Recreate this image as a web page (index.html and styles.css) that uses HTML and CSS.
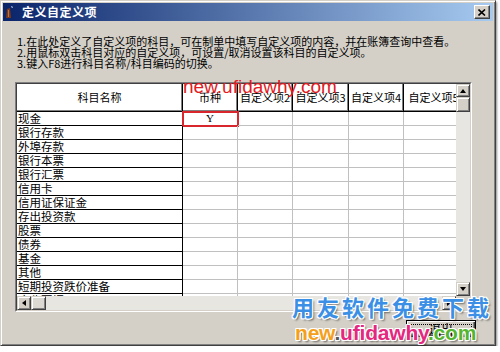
FILE: index.html
```html
<!DOCTYPE html>
<html lang="zh-CN">
<head>
<meta charset="UTF-8">
<meta name="viewport" content="width=device-width, initial-scale=1.0">
<title>定义自定义项</title>
<link rel="stylesheet" href="styles.css">
</head>
<body>
<div class="window">
    <div class="titlebar">
        <svg class="app-icon" viewBox="0 0 8 13" width="8" height="13">
            <path d="M2 3 L5 2 L6 12 L1 12 Z" fill="#7a3a1a"/>
            <path d="M3 4 L4 4 L4 11 L3 11 Z" fill="#c07040"/>
            <path d="M6 0 L8 1 L7 2 Z" fill="#fff"/>
        </svg>
        <span class="title">定义自定义项</span>
        <div class="close">
            <svg viewBox="0 0 8 7" width="8" height="7">
                <path d="M0.5 0.5 L7 6.5 M7 0.5 L0.5 6.5" stroke="#000" stroke-width="1.6"/>
            </svg>
        </div>
    </div>

    <div class="content">
        <div class="tips">
            <p>1.在此处定义了自定义项的科目，可在制单中填写自定义项的内容，并在账簿查询中查看。</p>
            <p>2.用鼠标双击科目对应的自定义项，可设置/取消设置该科目的自定义项。</p>
            <p>3.键入F8进行科目名称/科目编码的切换。</p>
        </div>

        <div class="grid">
            <div class="grid-inner">
                <div class="sheet">
                    <div class="row head">
                        <div class="cell name">科目名称</div>
                        <div class="cell">币种</div>
                        <div class="cell">自定义项2</div>
                        <div class="cell">自定义项3</div>
                        <div class="cell">自定义项4</div>
                        <div class="cell">自定义项5</div>
                    </div>
                    <div class="row"><div class="cell name">现金</div><div class="cell sel">Y</div><div class="cell"></div><div class="cell"></div><div class="cell"></div><div class="cell"></div></div>
                    <div class="row"><div class="cell name">银行存款</div><div class="cell"></div><div class="cell"></div><div class="cell"></div><div class="cell"></div><div class="cell"></div></div>
                    <div class="row"><div class="cell name">外埠存款</div><div class="cell"></div><div class="cell"></div><div class="cell"></div><div class="cell"></div><div class="cell"></div></div>
                    <div class="row"><div class="cell name">银行本票</div><div class="cell"></div><div class="cell"></div><div class="cell"></div><div class="cell"></div><div class="cell"></div></div>
                    <div class="row"><div class="cell name">银行汇票</div><div class="cell"></div><div class="cell"></div><div class="cell"></div><div class="cell"></div><div class="cell"></div></div>
                    <div class="row"><div class="cell name">信用卡</div><div class="cell"></div><div class="cell"></div><div class="cell"></div><div class="cell"></div><div class="cell"></div></div>
                    <div class="row"><div class="cell name">信用证保证金</div><div class="cell"></div><div class="cell"></div><div class="cell"></div><div class="cell"></div><div class="cell"></div></div>
                    <div class="row"><div class="cell name">存出投资款</div><div class="cell"></div><div class="cell"></div><div class="cell"></div><div class="cell"></div><div class="cell"></div></div>
                    <div class="row"><div class="cell name">股票</div><div class="cell"></div><div class="cell"></div><div class="cell"></div><div class="cell"></div><div class="cell"></div></div>
                    <div class="row"><div class="cell name">债券</div><div class="cell"></div><div class="cell"></div><div class="cell"></div><div class="cell"></div><div class="cell"></div></div>
                    <div class="row"><div class="cell name">基金</div><div class="cell"></div><div class="cell"></div><div class="cell"></div><div class="cell"></div><div class="cell"></div></div>
                    <div class="row"><div class="cell name">其他</div><div class="cell"></div><div class="cell"></div><div class="cell"></div><div class="cell"></div><div class="cell"></div></div>
                    <div class="row"><div class="cell name">短期投资跌价准备</div><div class="cell"></div><div class="cell"></div><div class="cell"></div><div class="cell"></div><div class="cell"></div></div>
                    <div class="row"><div class="cell name">应收票据</div><div class="cell"></div><div class="cell"></div><div class="cell"></div><div class="cell"></div><div class="cell"></div></div>
                </div>

                <div class="vscroll">
                    <div class="sb-btn up"></div>
                    <div class="sb-thumb v"></div>
                    <div class="sb-track"></div>
                    <div class="sb-btn down"></div>
                </div>

                <div class="hscroll">
                    <div class="sb-btn left"></div>
                    <div class="sb-thumb h"></div>
                    <div class="sb-track"></div>
                    <div class="sb-btn right"></div>
                </div>

                <div class="corner"></div>
            </div>
        </div>

        <div class="actions">
            <div class="btn"><span class="focus">退出</span></div>
        </div>
    </div>

    <!-- watermarks from the original screenshot -->
    <div class="mark mark-top">new.ufidawhy.com</div>
    <div class="mark mark-brand">用友软件免费下载</div>
    <div class="mark mark-site"><span class="orange">new</span><span class="dot">.</span><span class="pink">ufidawhy</span><span class="green">.com</span></div>
</div>
</body>
</html>
```

FILE: styles.css
```css
body {
    margin: 0;
    background-color: #fff;
    font-family: "Noto Sans CJK SC", "Liberation Sans", sans-serif;
    color: #000;
}

.window {
    position: relative;
    box-sizing: border-box;
    width: 496px;
    height: 346px;
    padding: 2px;
    background-color: #d4d0c8;
    border: 1px solid;
    border-color: #d4d0c8 #404040 #404040 #d4d0c8;
    box-shadow: inset 1px 1px 0 #fff, inset -1px -1px 0 #808080, 1px 2px 2px rgba(0, 0, 0, 0.45);
}

/* title bar */
.titlebar {
    display: flex;
    align-items: center;
    height: 18px;
    padding: 0 3px 0 2px;
    background: linear-gradient(to right, #0a246a, #a6caf0);
}

.app-icon {
    margin-right: 9px;
}

.title {
    flex: 1;
    color: #fff;
    font-size: 12px;
    font-weight: bold;
    letter-spacing: 0.5px;
    line-height: 18px;
}

.close {
    display: flex;
    align-items: center;
    justify-content: center;
    box-sizing: border-box;
    width: 16px;
    height: 14px;
    background-color: #d4d0c8;
    border: 1px solid;
    border-color: #fff #404040 #404040 #fff;
    box-shadow: inset -1px -1px 0 #808080;
}

/* body */
.content {
    padding: 15px 0 0 12px;
}

.tips {
    padding-left: 2px;
    font-size: 11px;
    line-height: 11px;
}

.tips p {
    margin: 0;
    white-space: nowrap;
}

.grid {
    width: 457px;
    margin-top: 13px;
    box-sizing: border-box;
    border: 1px solid;
    border-color: #808080 #fff #fff #808080;
}

.grid-inner {
    display: grid;
    grid-template-columns: 439px 14px;
    grid-template-rows: 212px 14px;
    border: 1px solid;
    border-color: #404040 #d4d0c8 #d4d0c8 #404040;
}

.sheet {
    overflow: hidden;
    background-color: #fff;
}

.row {
    display: grid;
    grid-template-columns: 166px 55px 55px 56px 55px 60px;
    height: 14px;
}

.cell {
    box-sizing: border-box;
    border-right: 1px solid #c0c0c0;
    border-bottom: 1px solid #c0c0c0;
    font-size: 11.5px;
    line-height: 13px;
    white-space: nowrap;
}

.cell.name {
    padding-left: 1px;
    border-right-color: #000;
    border-bottom-color: #000;
}

.row.head {
    height: 28px;
}

.head .cell {
    display: flex;
    align-items: center;
    justify-content: center;
    padding: 0;
    font-size: 11px;
    border-right: 1px solid #000;
    border-bottom: 1px solid #000;
    box-shadow: inset -1px -1px 0 #808080;
}

.cell.sel {
    text-align: center;
    font-family: "Liberation Serif", serif;
    font-size: 11px;
    outline: 2px solid #d9262c;
    outline-offset: -1px;
}

/* scroll bars */
.vscroll {
    display: flex;
    flex-direction: column;
}

.hscroll {
    display: flex;
}

.sb-track {
    flex: 1;
    background-color: #e8e6e1;
}

.sb-btn,
.sb-thumb {
    display: flex;
    align-items: center;
    justify-content: center;
    box-sizing: border-box;
    width: 14px;
    height: 14px;
    background-color: #d4d0c8;
    border: 1px solid;
    border-color: #d4d0c8 #404040 #404040 #d4d0c8;
    box-shadow: inset 1px 1px 0 #fff, inset -1px -1px 0 #808080;
}

.sb-btn.up {
    height: 13px;
}

.sb-thumb.v {
    height: 15px;
}

.sb-thumb.h {
    width: 15px;
    background-color: #dcd9d2;
}

.sb-btn::before {
    content: "";
    width: 0;
    height: 0;
    border: 3px solid transparent;
}

.sb-btn.up::before {
    border-bottom: 4px solid #000;
    border-top-width: 0;
}

.sb-btn.down::before {
    border-top: 4px solid #000;
    border-bottom-width: 0;
}

.sb-btn.left::before {
    border-right: 4px solid #000;
    border-left-width: 0;
}

.sb-btn.right::before {
    border-left: 4px solid #000;
    border-right-width: 0;
}

.corner {
    background-color: #d4d0c8;
}

/* buttons */
.actions {
    display: flex;
    justify-content: flex-end;
    padding: 8px 17px 0 0;
}

.btn {
    display: flex;
    box-sizing: border-box;
    width: 70px;
    height: 17px;
    padding: 3px;
    background-color: #d4d0c8;
    border: 1px solid #000;
    box-shadow: inset 1px 1px 0 #fff, inset -1px -1px 0 #404040, inset -2px -2px 0 #808080;
}

.focus {
    flex: 1;
    display: flex;
    align-items: center;
    justify-content: center;
    border: 1px dotted #000;
    font-size: 12px;
}

/* watermarks */
.mark {
    position: absolute;
    white-space: nowrap;
    pointer-events: none;
}

.mark-top {
    left: 182px;
    top: 76px;
    font-family: "Liberation Sans", sans-serif;
    font-size: 19px;
    line-height: 19px;
    color: #e31b23;
}

.mark-brand {
    left: 291px;
    top: 294px;
    font-size: 22px;
    line-height: 22px;
    font-weight: bold;
    letter-spacing: 3px;
    color: #3b90e6;
    text-shadow: 1px 0 0 #fff, -1px 0 0 #fff, 0 1px 0 #fff, 0 -1px 0 #fff,
        1px 1px 0 #fff, -1px -1px 0 #fff, 1px -1px 0 #fff, -1px 1px 0 #fff,
        2px 2px 2px rgba(0, 0, 0, 0.5);
}

.mark-site {
    left: 294px;
    top: 321px;
    font-family: "Liberation Sans", sans-serif;
    font-size: 21px;
    line-height: 21px;
    font-weight: bold;
    letter-spacing: -0.2px;
    text-shadow: 1px 0 0 #fff, -1px 0 0 #fff, 0 1px 0 #fff, 0 -1px 0 #fff,
        1px 1px 0 #fff, -1px -1px 0 #fff, 1px -1px 0 #fff, -1px 1px 0 #fff,
        2px 2px 2px rgba(0, 0, 0, 0.5);
}

.orange {
    color: #f5a01c;
}

.dot {
    color: #555;
}

.pink {
    color: #e5287f;
}

.green {
    color: #55b530;
}
```
